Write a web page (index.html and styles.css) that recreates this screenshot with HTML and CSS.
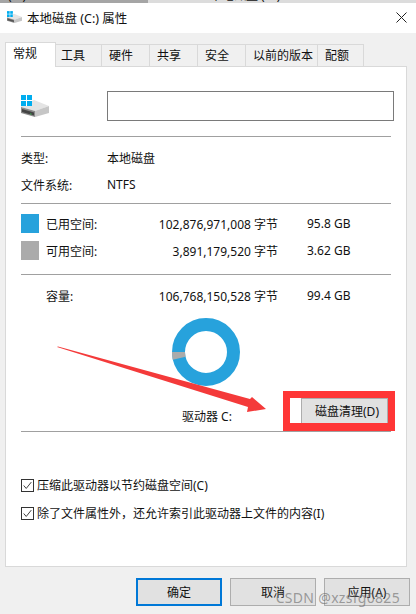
FILE: index.html
```html
<!DOCTYPE html>
<html lang="zh-CN">
<head>
    <meta charset="UTF-8">
    <title>本地磁盘 (C:) 属性</title>
    <link rel="stylesheet" href="styles.css">
</head>
<body>
    <div class="window">
        <div class="behind">
            <span class="behind-left">(C:)</span>
            <span class="behind-right">本地磁盘 (D:)</span>
        </div>

        <div class="titlebar">
            <svg class="title-icon" viewBox="0 0 28 22">
                <rect x="0" y="0" width="5" height="5" fill="#00adef"/>
                <rect x="6" y="0" width="5" height="5" fill="#00adef"/>
                <rect x="0" y="6" width="5" height="5" fill="#00adef"/>
                <rect x="6" y="6" width="5" height="5" fill="#00adef"/>
                <path d="M13 5 L28 11 L14 16 L0 12 L0 11 L11 11 L11 6 Z" fill="#e4e4e4"/>
                <path d="M0 12 L14 16 L14 22 L0 18 Z" fill="#8a8a8a"/>
                <path d="M1 14 L13 17.5 L13 20.5 L1 17 Z" fill="#555"/>
                <path d="M14 16 L28 11 L28 18 L14 22 Z" fill="#c6c6c6"/>
            </svg>
            <span class="title-text">本地磁盘 (C:) 属性</span>
            <svg class="close-icon" viewBox="0 0 11 11">
                <path d="M0.5 0.5 L10.5 10.5 M10.5 0.5 L0.5 10.5" stroke="#222" stroke-width="1" fill="none"/>
            </svg>
        </div>

        <div class="tabs">
            <div class="tab active">常规</div>
            <div class="tab tools">工具</div>
            <div class="tab">硬件</div>
            <div class="tab">共享</div>
            <div class="tab">安全</div>
            <div class="tab wide">以前的版本</div>
            <div class="tab narrow">配额</div>
        </div>

        <div class="panel">
            <div class="name-row">
                <svg class="drive-icon" viewBox="0 0 28 22">
                    <rect x="0" y="0" width="5" height="5" fill="#00adef"/>
                    <rect x="6" y="0" width="5" height="5" fill="#00adef"/>
                    <rect x="0" y="6" width="5" height="5" fill="#00adef"/>
                    <rect x="6" y="6" width="5" height="5" fill="#00adef"/>
                    <path d="M13 5 L28 11 L14 16 L0 12 L0 11 L11 11 L11 6 Z" fill="#e4e4e4"/>
                    <path d="M0 12 L14 16 L14 22 L0 18 Z" fill="#8a8a8a"/>
                    <path d="M1 14 L13 17.5 L13 20.5 L1 17 Z" fill="#444"/>
                    <path d="M14 16 L28 11 L28 18 L14 22 Z" fill="#c6c6c6"/>
                    <rect x="9" y="18.5" width="1.5" height="1" fill="#35b04a"/>
                </svg>
                <div class="name-box"></div>
            </div>
            <hr class="rule">

            <div class="info-row first"><span class="info-label">类型:</span><span>本地磁盘</span></div>
            <div class="info-row"><span class="info-label">文件系统:</span><span>NTFS</span></div>
            <hr class="rule rule-info">

            <div class="space-row used">
                <span class="swatch used-color"></span>
                <span>已用空间:</span>
                <span class="bytes">102,876,971,008 字节</span>
                <span>95.8 GB</span>
            </div>
            <div class="space-row">
                <span class="swatch free-color"></span>
                <span>可用空间:</span>
                <span class="bytes">3,891,179,520 字节</span>
                <span>3.62 GB</span>
            </div>
            <hr class="rule rule-space">

            <div class="space-row total">
                <span></span>
                <span>容量:</span>
                <span class="bytes">106,768,150,528 字节</span>
                <span>99.4 GB</span>
            </div>

            <svg class="donut" viewBox="0 0 68 68">
                <circle cx="34" cy="34" r="27.5" fill="none" stroke="#27a2dc" stroke-width="13"/>
                <path d="M6.5 34 A27.5 27.5 0 0 0 7.2 40.2" fill="none" stroke="#ababab" stroke-width="13"/>
            </svg>

            <div class="drive-row">
                <span class="drive-label">驱动器 C:</span>
                <button class="btn cleanup">磁盘清理(D)</button>
            </div>
            <hr class="rule rule-drive">

            <label class="check first-check"><span class="box"><svg viewBox="0 0 13 13"><path d="M2 6.5 L5 10 L11 2.5" stroke="#333" stroke-width="1.1" fill="none"/></svg></span>压缩此驱动器以节约磁盘空间(C)</label>
            <label class="check"><span class="box"><svg viewBox="0 0 13 13"><path d="M2 6.5 L5 10 L11 2.5" stroke="#333" stroke-width="1.1" fill="none"/></svg></span>除了文件属性外，还允许索引此驱动器上文件的内容(I)</label>
        </div>

        <div class="actions">
            <button class="btn action default">确定</button>
            <button class="btn action">取消</button>
            <button class="btn action">应用(A)</button>
        </div>

        <!-- annotations drawn over the screenshot -->
        <div class="red-box"></div>
        <svg class="arrow" viewBox="0 0 416 614">
            <path d="M57 347 L58 346.5 L250 399 L252 397 L266 409 L247 412 L248 407 Z" fill="#f43a3a"/>
        </svg>
        <div class="watermark">CSDN @xzsfg0825</div>
    </div>
</body>
</html>
```

FILE: styles.css
```css
* {
    box-sizing: border-box;
}
body {
    margin: 0;
    font-family: "Noto Sans", "Noto Sans CJK SC", sans-serif;
    font-size: 12px;
    color: #111;
}
.window {
    position: relative;
    width: 416px;
    height: 614px;
    overflow: hidden;
    background: #f0f0f0;
}
.behind {
    display: flex;
    align-items: flex-end;
    height: 3px;
    overflow: hidden;
    background: linear-gradient(to right, #a5a5a5 148px, #dcdcdc 148px);
}
.behind-left {
    width: 210px;
    padding-left: 8px;
    flex: none;
    line-height: 14px;
}
.behind-right {
    flex: none;
    line-height: 14px;
}
.titlebar {
    display: flex;
    align-items: center;
    height: 30px;
    padding: 0 9px 2px 7px;
    background: #fff;
}
.title-icon {
    width: 15px;
    height: 12px;
    margin-right: 5px;
    flex: none;
}
.title-text {
    flex: 1;
    font-size: 12.5px;
}
.close-icon {
    width: 11px;
    height: 11px;
    flex: none;
}
.tabs {
    display: flex;
    align-items: flex-end;
    height: 33px;
    padding-left: 5px;
}
.tab {
    width: 48px;
    height: 22px;
    padding: 2px 0 0 7px;
    background: #f0f0f0;
    border: 1px solid #d9d9d9;
    border-left: none;
    border-bottom: none;
    line-height: 18px;
}
.tab.tools {
    width: 46px;
    padding-left: 5px;
}
.tab.narrow {
    width: 46px;
}
.tab.wide {
    width: 72px;
}
.tab.active {
    position: relative;
    z-index: 1;
    width: 51px;
    height: 25px;
    margin-bottom: -1px;
    padding: 2px 0 0 7px;
    background: #fff;
    border-left: 1px solid #d9d9d9;
}
.panel {
    width: 402px;
    height: 501px;
    margin-left: 5px;
    padding-left: 15px;
    background: #fff;
    border: 1px solid #d9d9d9;
}
.name-row {
    display: flex;
    align-items: center;
    height: 30px;
    margin-top: 24px;
}
.drive-icon {
    width: 28px;
    height: 22px;
    margin-right: 58px;
    flex: none;
}
.name-box {
    width: 287px;
    height: 30px;
    flex: none;
    border: 1px solid #7a7a7a;
}
.rule {
    width: 370px;
    height: 1px;
    margin: 15px 0 0;
    border: none;
    background: #a0a0a0;
}
.info-row {
    display: flex;
    height: 27px;
    align-items: center;
}
.info-row.first {
    margin-top: 7px;
}
.info-label {
    width: 86px;
}
.rule-info {
    margin-top: 5px;
}
.space-row {
    display: grid;
    grid-template-columns: 25px 75px 157px auto;
    align-items: center;
    height: 27px;
}
.space-row .bytes {
    text-align: right;
}
.space-row span:last-child {
    margin-left: 29px;
}
.space-row.used {
    margin-top: 6px;
}
.rule-space {
    margin-top: 10px;
}
.space-row.total {
    margin-top: 7px;
}
.swatch {
    width: 18px;
    height: 19px;
}
.used-color {
    background: #27a2dc;
}
.free-color {
    background: #ababab;
}
.donut {
    display: block;
    width: 68px;
    height: 68px;
    margin: 9px 0 0 151px;
}
.drive-row {
    position: relative;
    display: flex;
    height: 26px;
    margin-top: 12px;
}
.drive-label {
    position: absolute;
    left: 161px;
    top: 9px;
}
.btn {
    font-family: inherit;
    font-size: 12px;
    color: #111;
    background: #e1e1e1;
    border: 1px solid #adadad;
    padding: 0;
}
.cleanup {
    width: 87px;
    height: 26px;
    margin-left: 280px;
    padding-left: 5px;
}
.rule-drive {
    margin-top: 7px;
}
.check {
    display: flex;
    align-items: center;
    height: 18px;
}
.first-check {
    margin-top: 44px;
}
.check + .check {
    margin-top: 10px;
}
.box {
    width: 13px;
    height: 13px;
    margin-right: 3px;
    flex: none;
    border: 1px solid #333;
    background: #fff;
}
.box svg {
    display: block;
    width: 11px;
    height: 11px;
}
.actions {
    display: flex;
    justify-content: flex-end;
    gap: 8px;
    padding: 11px 6px 0 0;
}
.action {
    width: 86px;
    height: 28px;
}
.action.default {
    border: 2px solid #0078d7;
}
.red-box {
    position: absolute;
    left: 283px;
    top: 391px;
    width: 112px;
    height: 40px;
    border: solid #ff3636;
    border-width: 7px 7px 8px 7px;
}
.arrow {
    position: absolute;
    left: 0;
    top: 0;
    width: 416px;
    height: 614px;
}
.watermark {
    position: absolute;
    right: 16px;
    top: 588px;
    font-size: 14px;
    letter-spacing: 0.3px;
    color: rgba(110, 110, 110, 0.65);
}
```
